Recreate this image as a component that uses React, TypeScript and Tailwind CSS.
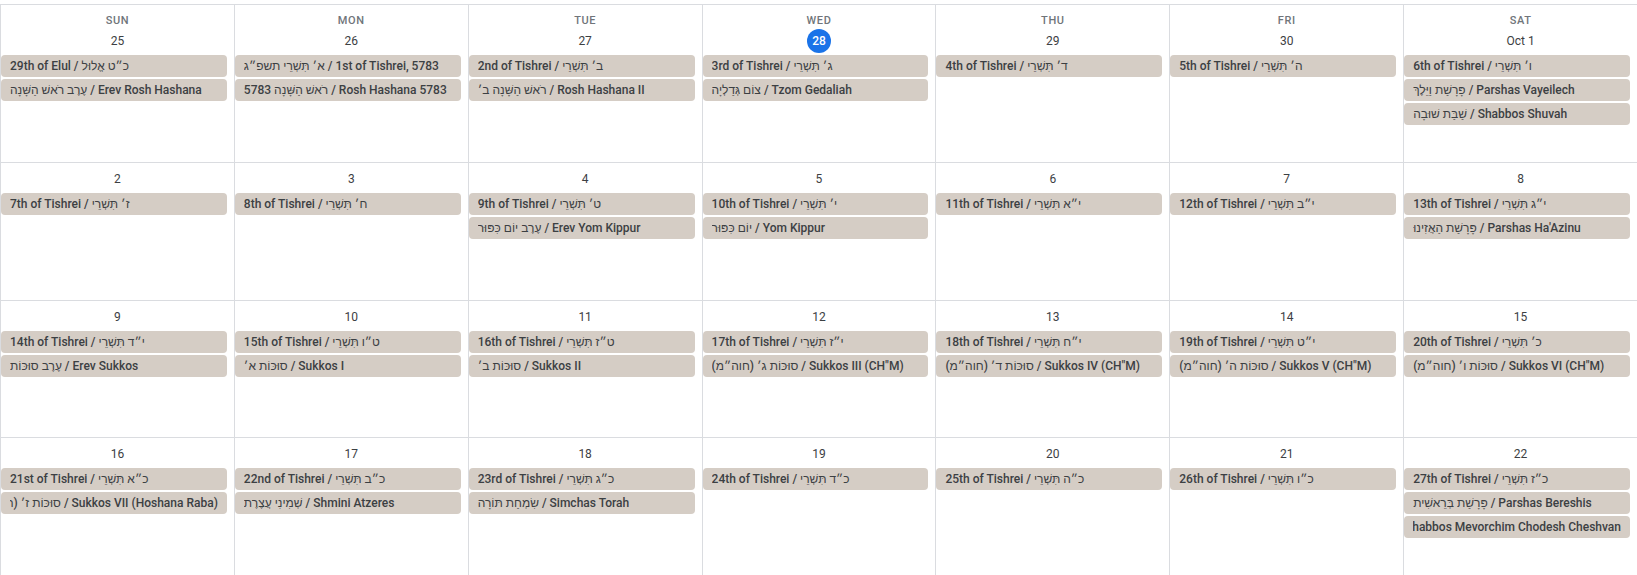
import React from 'react'

type Day = {
  date: string
  today?: boolean
  events: string[]
}

const dayNames = ['SUN', 'MON', 'TUE', 'WED', 'THU', 'FRI', 'SAT']

// event strings are written in logical order; the chips render rtl like the source calendar
const weeks: Day[][] = [
  [
    { date: '25', events: ['כ״ט אֱלוּל / 29th of Elul', 'Erev Rosh Hashana / עֶרֶב רֹאשׁ הַשָּׁנָה'] },
    { date: '26', events: ['1st of Tishrei, 5783 / א׳ תִּשְׁרֵי תשפ״ג', 'Rosh Hashana 5783 / רֹאשׁ הַשָּׁנָה 5783'] },
    { date: '27', events: ['ב׳ תִּשְׁרֵי / 2nd of Tishrei', 'Rosh Hashana II / רֹאשׁ הַשָּׁנָה ב׳'] },
    { date: '28', today: true, events: ['ג׳ תִּשְׁרֵי / 3rd of Tishrei', 'Tzom Gedaliah / צוֹם גְּדַלְיָה'] },
    { date: '29', events: ['ד׳ תִּשְׁרֵי / 4th of Tishrei'] },
    { date: '30', events: ['ה׳ תִּשְׁרֵי / 5th of Tishrei'] },
    {
      date: 'Oct 1',
      events: ['ו׳ תִּשְׁרֵי / 6th of Tishrei', 'Parshas Vayeilech / פָּרָשַׁת וַיֵּלֶךְ', 'Shabbos Shuvah / שַׁבַּת שׁוּבָה'],
    },
  ],
  [
    { date: '2', events: ['ז׳ תִּשְׁרֵי / 7th of Tishrei'] },
    { date: '3', events: ['ח׳ תִּשְׁרֵי / 8th of Tishrei'] },
    { date: '4', events: ['ט׳ תִּשְׁרֵי / 9th of Tishrei', 'Erev Yom Kippur / עֶרֶב יוֹם כִּפּוּר'] },
    { date: '5', events: ['י׳ תִּשְׁרֵי / 10th of Tishrei', 'Yom Kippur / יוֹם כִּפּוּר'] },
    { date: '6', events: ['י״א תִּשְׁרֵי / 11th of Tishrei'] },
    { date: '7', events: ['י״ב תִּשְׁרֵי / 12th of Tishrei'] },
    { date: '8', events: ['י״ג תִּשְׁרֵי / 13th of Tishrei', "Parshas Ha'Azinu / פָּרָשַׁת הַאֲזִינוּ"] },
  ],
  [
    { date: '9', events: ['י״ד תִּשְׁרֵי / 14th of Tishrei', 'Erev Sukkos / עֶרֶב סוּכּוֹת'] },
    { date: '10', events: ['ט״ו תִּשְׁרֵי / 15th of Tishrei', 'Sukkos I / סוּכּוֹת א׳'] },
    { date: '11', events: ['ט״ז תִּשְׁרֵי / 16th of Tishrei', 'Sukkos II / סוּכּוֹת ב׳'] },
    { date: '12', events: ['י״ז תִּשְׁרֵי / 17th of Tishrei', 'Sukkos III (CH"M) / סוּכּוֹת ג׳ (חוה״מ)'] },
    { date: '13', events: ['י״ח תִּשְׁרֵי / 18th of Tishrei', 'Sukkos IV (CH"M) / סוּכּוֹת ד׳ (חוה״מ)'] },
    { date: '14', events: ['י״ט תִּשְׁרֵי / 19th of Tishrei', 'Sukkos V (CH"M) / סוּכּוֹת ה׳ (חוה״מ)'] },
    { date: '15', events: ['כ׳ תִּשְׁרֵי / 20th of Tishrei', 'Sukkos VI (CH"M) / סוּכּוֹת ו׳ (חוה״מ)'] },
  ],
  [
    { date: '16', events: ['כ״א תִּשְׁרֵי / 21st of Tishrei', 'Sukkos VII (Hoshana Raba) / סוּכּוֹת ז׳ (הוֹשַׁעְנָא רַבָּה)'] },
    { date: '17', events: ['כ״ב תִּשְׁרֵי / 22nd of Tishrei', 'Shmini Atzeres / שְׁמִינִי עֲצֶרֶת'] },
    { date: '18', events: ['כ״ג תִּשְׁרֵי / 23rd of Tishrei', 'Simchas Torah / שִׂמְחַת תּוֹרָה'] },
    { date: '19', events: ['כ״ד תִּשְׁרֵי / 24th of Tishrei'] },
    { date: '20', events: ['כ״ה תִּשְׁרֵי / 25th of Tishrei'] },
    { date: '21', events: ['כ״ו תִּשְׁרֵי / 26th of Tishrei'] },
    {
      date: '22',
      events: [
        'כ״ז תִּשְׁרֵי / 27th of Tishrei',
        'Parshas Bereshis / פָּרָשַׁת בְּרֵאשִׁית',
        'Shabbos Mevorchim Chodesh Cheshvan / שַׁבָּת מְבָרְכִים חֹדֶשׁ חֶשְׁוָן',
      ],
    },
  ],
]

function EventChip({ title }: { title: string }) {
  return (
    <div className="mr-[7px] h-[22px] rounded-[4px] bg-[#d5cdc5] px-[9px] text-[12px] font-medium leading-[22px] text-[#3c4043]">
      <div dir="rtl" className="overflow-hidden whitespace-nowrap text-left">
        {title}
      </div>
    </div>
  )
}

function DateBadge({ day }: { day: Day }) {
  if (day.today) {
    return (
      <div className="flex h-[24px] items-center justify-center">
        <span className="flex h-[24px] w-[24px] items-center justify-center rounded-full bg-[#1a73e8] text-[12px] font-medium text-white">
          {day.date}
        </span>
      </div>
    )
  }
  return (
    <div className="flex h-[24px] items-center justify-center text-[12px] font-normal text-[#3c4043]">
      {day.date}
    </div>
  )
}

export default function App() {
  return (
    <div
      className="h-[575px] w-full overflow-hidden bg-white pt-[4px]"
      style={{ fontFamily: 'Roboto, "Liberation Sans", "Noto Sans", sans-serif' }}
    >
      <div className="grid h-[571px] grid-rows-[158px_138px_137px_1fr]">
        {weeks.map((week, wi) => (
          <div key={wi} className="grid grid-cols-7 border-t border-[#dadce0]">
            {week.map((day, di) => (
              <div key={di} className="min-w-0 border-l border-[#dadce0]">
                {wi === 0 ? (
                  <div className="pt-[8px]">
                    <div className="h-[16px] text-center text-[11px] font-medium leading-[16px] tracking-[0.6px] text-[#70757a]">
                      {dayNames[di]}
                    </div>
                  </div>
                ) : (
                  <div className="h-[4px]" />
                )}
                <DateBadge day={day} />
                <div className="mt-[2px] flex flex-col gap-[2px]">
                  {day.events.map((ev, ei) => (
                    <EventChip key={ei} title={ev} />
                  ))}
                </div>
              </div>
            ))}
          </div>
        ))}
      </div>
    </div>
  )
}
